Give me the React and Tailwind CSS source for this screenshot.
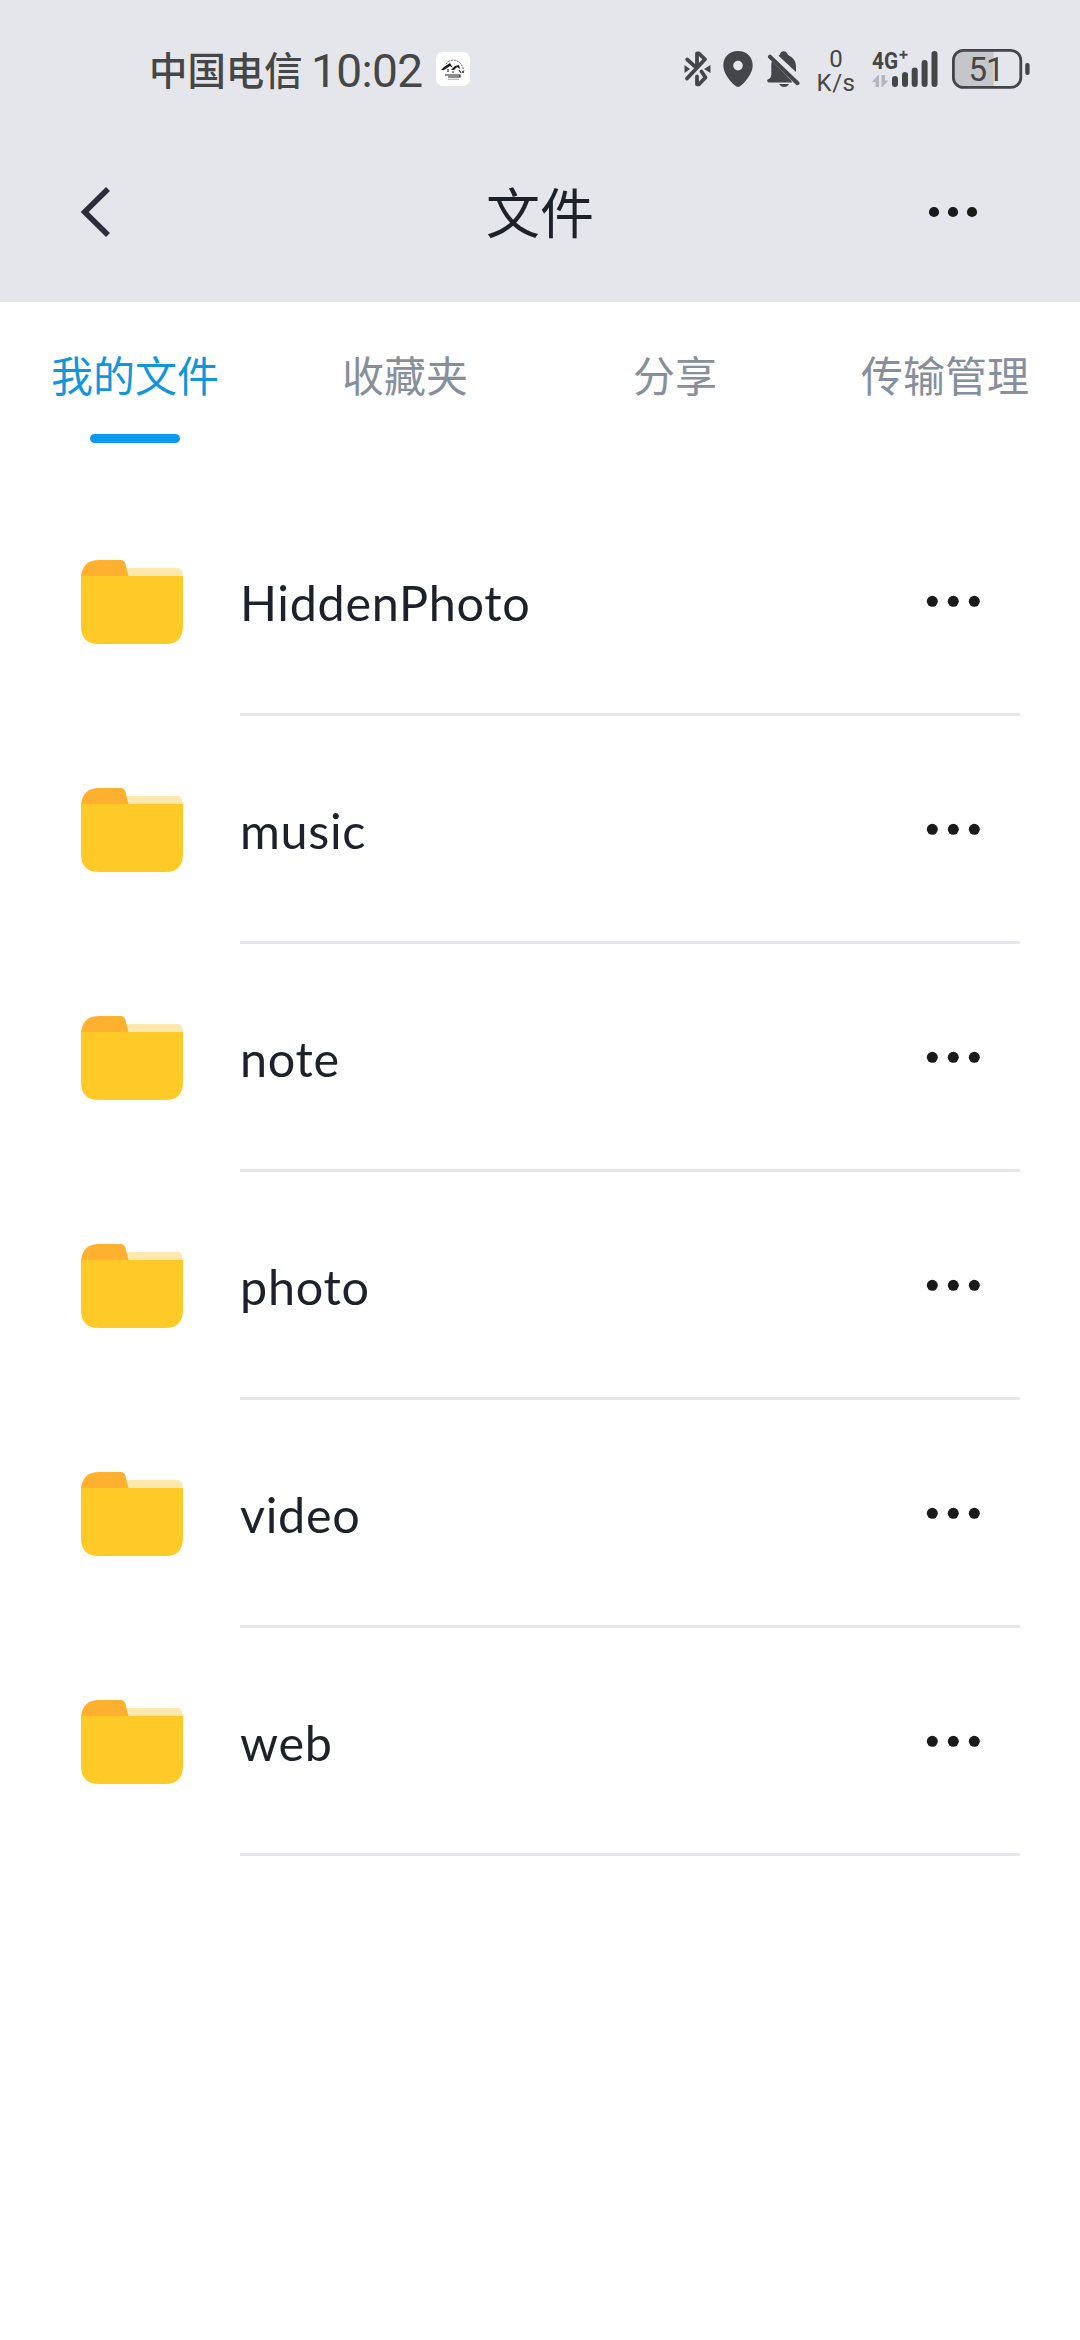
import React from "react";

const folders = ["HiddenPhoto", "music", "note", "photo", "video", "web"];

const tabs = ["我的文件", "收藏夹", "分享", "传输管理"];

function AppBadge() {
  return (
    <svg className="ml-[14px] h-[34px] w-[34px]" viewBox="0 0 34 34">
      <rect width="34" height="34" rx="7" fill="#fff" />
      <path d="M10 12C14 6 25 6 28 19" fill="none" stroke="#5c5557" strokeWidth="0.9" strokeDasharray="2 1" />
      <path d="M5 18L8 15L14 11L17 16L14 14L11 16L8 18Z" fill="#1c1a1b" />
      <path d="M15 18L19 14L23 13L24 17L21 15L18 18Z" fill="#1c1a1b" />
      <path d="M12 17V20M16 20H18M23 18L25 21" stroke="#2b2728" strokeWidth="1.2" />
      <path d="M26 19H28V21H26Z" fill="#8d4a45" />
      <path d="M9 23H24V25H12" fill="none" stroke="#1c1a1b" strokeWidth="1.1" />
      <path d="M12 27.3H23" stroke="#aaa" strokeWidth="1" />
    </svg>
  );
}

function BluetoothIcon() {
  return (
    <svg className="h-9 w-[27px]" viewBox="0 0 27 36">
      <g fill="none" stroke="#454648" strokeWidth="3.8" strokeLinecap="round" strokeLinejoin="round">
        <path d="M3.2 8.5L10.5 15.2M13 13V2.5H15L21 8.3L3 27.5" />
        <path d="M17.5 20.5L21.5 26.5L15 33.3H13V25.5" />
      </g>
      <path d="M0.5 14L6 18L0.5 22Z M26.5 14L20 18L26.5 22Z" fill="#454648" />
    </svg>
  );
}

function PinIcon() {
  return (
    <svg className="ml-3 h-9 w-[30px]" viewBox="0 0 30 36">
      <path
        fillRule="evenodd"
        d="M15 0C6.5 0 0.3 6 0.3 14.2C0.3 22 6.5 29.5 12 34.6C13.8 36.3 16.2 36.3 18 34.6C23.5 29.5 29.7 22 29.7 14.2C29.7 6 23.5 0 15 0ZM15 9.8A4.8 4.8 0 1 1 15 19.4A4.8 4.8 0 1 1 15 9.8Z"
        fill="#454648"
      />
    </svg>
  );
}

function MutedBellIcon() {
  return (
    <svg className="ml-[14px] h-9 w-[33px]" viewBox="0 0 33 36">
      <path
        d="M11.5 4.8C12.5 3.8 12.8 3.5 13.2 2.5C14.5 -0.6 19 -0.6 20.2 2.5C20.6 3.5 21 3.8 22 4.4C26.5 6.7 29 10.5 29 15.5V21Z"
        fill="#454648"
      />
      <path
        d="M5 10.3L24.5 29.8L25 31.5H2A1.8 1.8 0 0 1 1 28.2C3.5 27.5 4.3 26 4.3 22V15C4.3 13 4.4 11.8 5 10.3Z"
        fill="#454648"
      />
      <path d="M3 5.7L30.5 32.2" stroke="#454648" strokeWidth="4" strokeLinecap="round" />
      <path d="M12.2 33H22C20.5 37 13.7 37 12.2 33Z" fill="#454648" />
    </svg>
  );
}

function SignalIcon() {
  return (
    <svg
      className="ml-[17px] h-[54px] w-[67px] shrink-0"
      viewBox="871 42 67 54"
      fontFamily="'Roboto', sans-serif"
      fontWeight="700"
      fill="#454648"
    >
      <text x="872" y="69" fontSize="24" textLength="26" lengthAdjust="spacingAndGlyphs">4G</text>
      <path d="M899.5 54.7H907.5M903.5 50.7V58.7" stroke="#454648" strokeWidth="2" />
      <path d="M872 82L878 75H879V87H875.5V82ZM881.5 75H885V80.5H888.5L882.5 87H881.5Z" fill="#b5b6ba" />
      <path
        d="M895 79V84M905 75V84M914.7 70.5V84M924.6 63V84M934.5 54V84"
        stroke="#454648"
        strokeWidth="6"
        strokeLinecap="round"
      />
    </svg>
  );
}

function BatteryIcon() {
  return (
    <svg className="ml-[14px] h-10 w-[78px]" viewBox="952 49 78 40">
      <path d="M993.6 50H964C957 50 953.5 54 953.5 60V77C953.5 83 957 87 964 87H993.6Z" fill="#c5c6ca" />
      <rect x="953.4" y="50.4" width="67.4" height="37" rx="10" fill="none" stroke="#454648" strokeWidth="2.8" />
      <rect x="1025.2" y="63" width="4.4" height="12" rx="2" fill="#454648" />
      <text x="968.5" y="80.7" fontFamily="'Roboto', sans-serif" fontSize="33" textLength="36" fill="#454648">
        51
      </text>
    </svg>
  );
}

function StatusBar() {
  return (
    <div className="flex h-[120px] items-start pr-[50px] pl-[149px] pt-[49px] text-[#454648]">
      <div className="flex h-10 items-center">
        <span className="-mt-[3px] w-[162px] font-['Noto_Sans_CJK_SC',sans-serif] text-[38.4px] leading-10 font-medium whitespace-nowrap">
          中国电信
        </span>
        <span className="mt-[3px] w-[111px] font-['Roboto','Noto_Sans_CJK_SC',sans-serif] text-[46px] leading-10 font-[450] tracking-[-0.6px] whitespace-nowrap">
          10:02
        </span>
        <AppBadge />
      </div>
      <div className="ml-auto flex h-10 items-center">
        <BluetoothIcon />
        <PinIcon />
        <MutedBellIcon />
        <div className="mt-[3px] ml-[18px] flex w-9 flex-col items-center font-['Roboto',sans-serif] text-[24px] leading-[24px]">
          <span>0</span>
          <span className="tracking-[0.5px]">K/s</span>
        </div>
        <SignalIcon />
        <BatteryIcon />
      </div>
    </div>
  );
}

function Header() {
  return (
    <header className="h-[302px] bg-[#e5e6eb]">
      <StatusBar />
      <div className="flex h-[182px] items-start justify-between pt-[64px] pr-[102px] pl-[80px]">
        <button className="flex h-[55px] w-[72px]" aria-label="返回">
          <svg className="h-[55px] w-[32px]" viewBox="0 0 32 55">
            <path d="M28 5L4.7 28L28 51" fill="none" stroke="#2b2d3a" strokeWidth="5.6" />
          </svg>
        </button>
        <h1 className="-mt-px font-['Noto_Sans_CJK_SC',sans-serif] text-[54px] leading-[55px] text-[#1d2129]">文件</h1>
        <button className="flex h-[55px] w-[50px] items-center" aria-label="更多">
          <svg className="h-3 w-[50px]" viewBox="0 0 50 12" fill="#1a1a1a">
            <circle cx="6" cy="6" r="5.1" />
            <circle cx="25" cy="6" r="5.1" />
            <circle cx="44" cy="6" r="5.1" />
          </svg>
        </button>
      </div>
    </header>
  );
}

function Tabs() {
  return (
    <nav className="grid h-[186px] grid-cols-4 font-['Noto_Sans_CJK_SC',sans-serif] text-[42px] leading-[60px]">
      {tabs.map((tab, i) => (
        <div key={tab} className="flex flex-col items-center pt-[42px]">
          <span className={i === 0 ? "text-[#1296db]" : "text-[#86909c]"}>{tab}</span>
          {i === 0 && <span className="mt-[30px] h-[9px] w-[90px] rounded-full bg-[#0d99f0]" />}
        </div>
      ))}
    </nav>
  );
}

function FolderIcon() {
  return (
    <svg className="h-[84px] w-[102px]" viewBox="0 0 102 84">
      <path d="M42 8H97Q101 8 102 16V20H42Z" fill="#ffe8b0" />
      <path d="M0 20V16Q2 0 18 0H40Q43 0 44.3 3.5L48.5 20Z" fill="#ffb02e" />
      <path d="M0 16H102V66Q102 84 84 84H18Q0 84 0 66Z" fill="#ffca28" />
    </svg>
  );
}

function FolderRow({ name }) {
  return (
    <li className="flex h-[228px] pr-[60px] pl-[81px]">
      <div className="w-[159px] pt-[72px]">
        <FolderIcon />
      </div>
      <div className="flex flex-1 items-start justify-between border-b-[3px] border-[#e5e6eb] pr-[40px]">
        <span className="pt-[84px] font-['Lato','Noto_Sans_CJK_SC',sans-serif] text-[48.5px] leading-[60px] tracking-[0.7px] text-[#1d2129]">
          {name}
        </span>
        <svg className="mt-[107px] h-3 w-[54px]" viewBox="0 0 54 12" fill="#1a1a1a">
          <circle cx="6.3" cy="6.3" r="5.5" />
          <circle cx="27.3" cy="6.3" r="5.5" />
          <circle cx="48.3" cy="6.3" r="5.5" />
        </svg>
      </div>
    </li>
  );
}

export default function App() {
  return (
    <main className="h-[2340px] w-[1080px] overflow-hidden bg-white">
      <Header />
      <Tabs />
      <ul>
        {folders.map((name) => (
          <FolderRow key={name} name={name} />
        ))}
      </ul>
    </main>
  );
}
